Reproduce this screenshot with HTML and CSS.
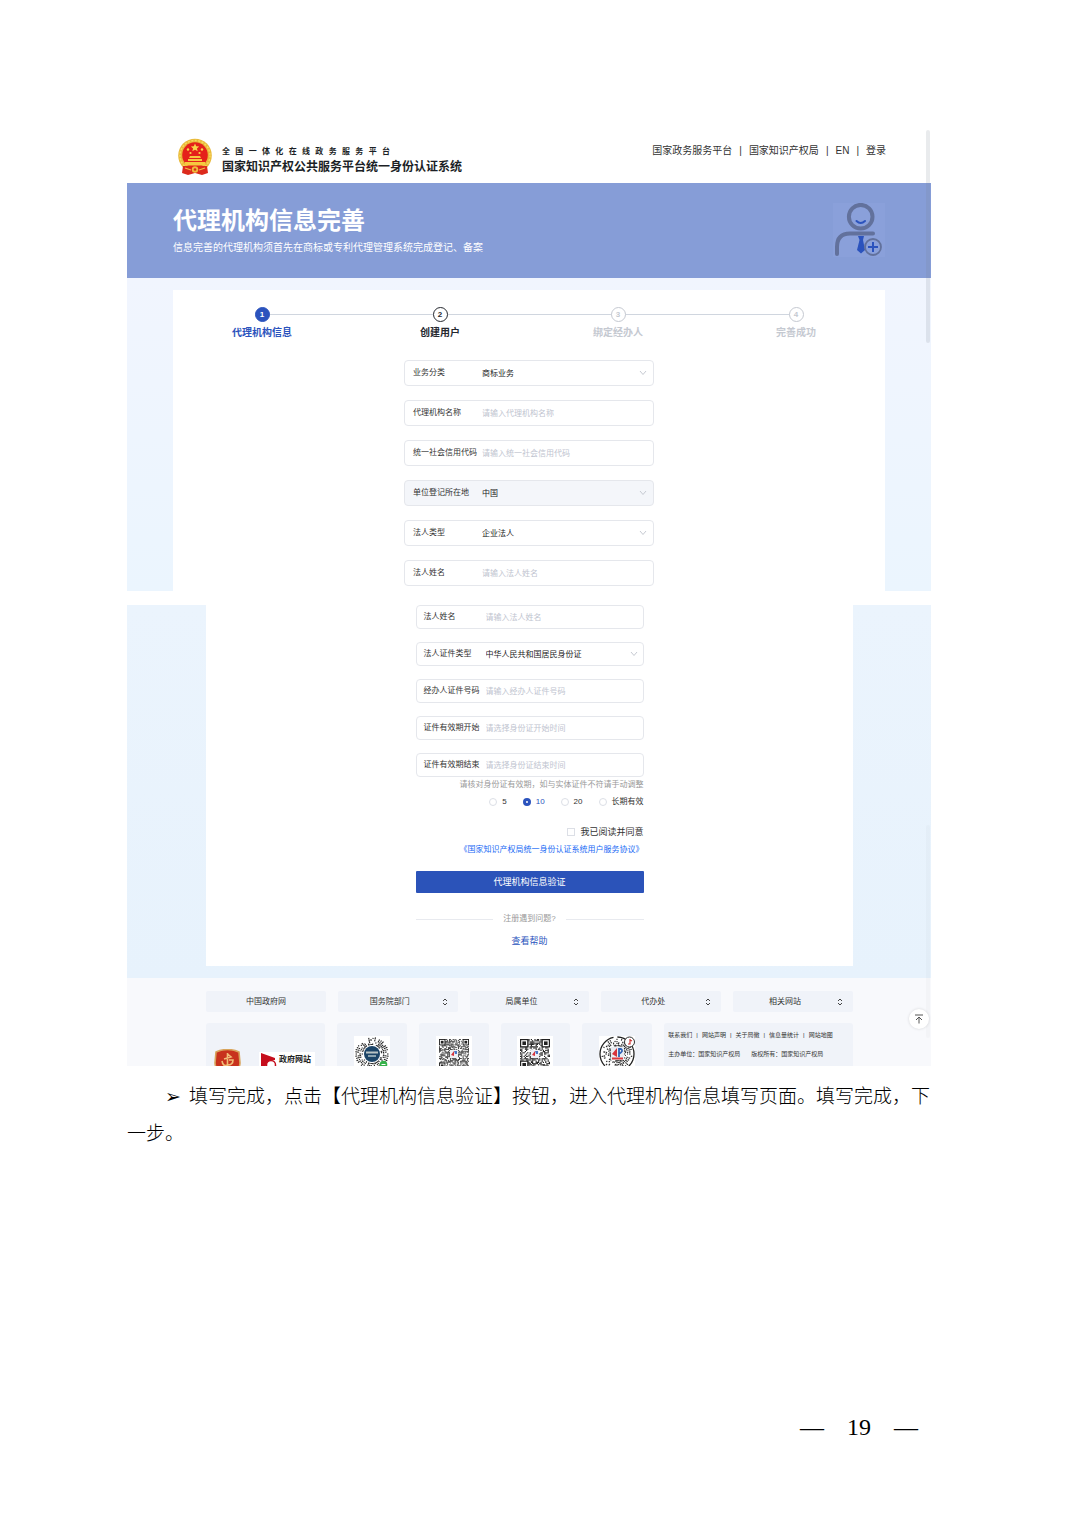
FILE: index.html
```html
<!DOCTYPE html>
<html lang="zh-CN">
<head>
  <meta charset="UTF-8">
  <title>代理机构信息完善</title>
  <link rel="stylesheet" href="styles.css">
</head>
<body>
<main class="page">
  <section class="screen">
    <header class="site-header">
      <svg class="emblem" viewBox="0 0 36 38">
        <circle cx="18" cy="17.500" r="16.800" fill="#e9b93a"/>
        <circle cx="18" cy="17.500" r="15" fill="none" stroke="#f7d95c" stroke-width="1.500" stroke-dasharray="2 1.500"/>
        <path d="M6 28 H30 L31 35 L25 37 L18 35 L11 37 L5 35 Z" fill="#dc2a1c"/>
        <circle cx="18" cy="17" r="12.800" fill="#e5211a"/>
        <path d="M18 5.500 l1.200 2.800 3 .2 -2.300 1.900 .8 2.900 -2.700 -1.600 -2.700 1.600 .8 -2.900 -2.300 -1.900 3 -.2z" fill="#f8d548"/>
        <circle cx="11" cy="11.500" r="1.200" fill="#f8d548"/>
        <circle cx="25" cy="11.500" r="1.200" fill="#f8d548"/>
        <circle cx="13.500" cy="15" r="1.100" fill="#f8d548"/>
        <circle cx="22.500" cy="15" r="1.100" fill="#f8d548"/>
        <path d="M13 18 H23 L24 20 H12 Z M11 21 H25 V23 H11 Z M8 24 H28 V27.500 H8 Z" fill="#f6c93f"/>
        <circle cx="18" cy="31.500" r="3.200" fill="#eebc3b"/>
        <circle cx="18" cy="31.500" r="1.300" fill="#dc2a1c"/>
        <path d="M8 30 L14 32 M28 30 L22 32" stroke="#f0c040" stroke-width="1.200"/>
      </svg>
      <div class="brand">
        <div class="brand-small">全国一体化在线政务服务平台</div>
        <div class="brand-name">国家知识产权公共服务平台统一身份认证系统</div>
      </div>
      <nav class="top-nav">
        <a href="#">国家政务服务平台</a><span>|</span>
        <a href="#">国家知识产权局</a><span>|</span>
        <a href="#">EN</a><span>|</span>
        <a href="#">登录</a>
      </nav>
    </header>

    <div class="banner">
      <div>
        <h1>代理机构信息完善</h1>
        <p>信息完善的代理机构须首先在商标或专利代理管理系统完成登记、备案</p>
      </div>
      <svg class="banner-icon" viewBox="0 0 52 54">
        <rect width="52" height="54" fill="#8aa0da"/>
        <g fill="none" stroke="#62719c" stroke-linecap="round">
          <circle cx="27.700" cy="13.700" r="11.800" stroke-width="4"/>
          <path d="M4 51 V44 Q4 30.500 17 30.500 H40" stroke-width="4"/>
        </g>
        <path d="M23.500 18 Q27.700 22 32 18" fill="none" stroke="#2b53bd" stroke-width="2" stroke-linecap="round"/>
        <path d="M25 33 H31 L30 37 L32 47 L28 50.500 L24 47 L26.500 37 Z" fill="#2b53bd"/>
        <circle cx="40" cy="44" r="8" fill="#8aa0da" stroke="#62719c" stroke-width="1.800"/>
        <path d="M35 44 H45 M40 39 V49" stroke="#2b53bd" stroke-width="2"/>
      </svg>
    </div>

    <div class="backdrop">
      <div class="card">
        <ol class="steps">
          <li class="active"><span class="dot">1</span>代理机构信息</li>
          <li class="next"><span class="dot">2</span>创建用户</li>
          <li><span class="dot">3</span>绑定经办人</li>
          <li><span class="dot">4</span>完善成功</li>
        </ol>
        <form class="form">
          <div class="field">
            <label for="biz">业务分类</label>
            <select id="biz"><option>商标业务</option></select>
            <svg class="chevron" viewBox="0 0 8 6"><path d="M1 1 L4 4.500 L7 1"/></svg>
          </div>
          <div class="field">
            <label for="agency">代理机构名称</label>
            <input id="agency" type="text" placeholder="请输入代理机构名称">
          </div>
          <div class="field">
            <label for="code">统一社会信用代码</label>
            <input id="code" type="text" placeholder="请输入统一社会信用代码">
          </div>
          <div class="field disabled">
            <label for="place">单位登记所在地</label>
            <select id="place"><option>中国</option></select>
            <svg class="chevron" viewBox="0 0 8 6"><path d="M1 1 L4 4.500 L7 1"/></svg>
          </div>
          <div class="field">
            <label for="ptype">法人类型</label>
            <select id="ptype"><option>企业法人</option></select>
            <svg class="chevron" viewBox="0 0 8 6"><path d="M1 1 L4 4.500 L7 1"/></svg>
          </div>
          <div class="field">
            <label for="pname">法人姓名</label>
            <input id="pname" type="text" placeholder="请输入法人姓名">
          </div>
        </form>
      </div>
    </div>
    <div class="scrollbar"></div>
  </section>

  <section class="screen">
    <div class="backdrop backdrop-low">
      <div class="card">
        <form class="form form-small">
          <div class="field">
            <label for="lname">法人姓名</label>
            <input id="lname" type="text" placeholder="请输入法人姓名">
          </div>
          <div class="field">
            <label for="idtype">法人证件类型</label>
            <select id="idtype"><option>中华人民共和国居民身份证</option></select>
            <svg class="chevron" viewBox="0 0 8 6"><path d="M1 1 L4 4.500 L7 1"/></svg>
          </div>
          <div class="field">
            <label for="idno">经办人证件号码</label>
            <input id="idno" type="text" placeholder="请输入经办人证件号码">
          </div>
          <div class="field">
            <label for="start">证件有效期开始</label>
            <input id="start" type="text" placeholder="请选择身份证开始时间">
          </div>
          <div class="field">
            <label for="end">证件有效期结束</label>
            <input id="end" type="text" placeholder="请选择身份证结束时间">
          </div>
        </form>
        <div class="form-foot">
          <p class="hint">请核对身份证有效期，如与实体证件不符请手动调整</p>
          <div class="radios">
            <label><input type="radio" name="years">5</label>
            <label><input type="radio" name="years" checked>10</label>
            <label><input type="radio" name="years">20</label>
            <label><input type="radio" name="years">长期有效</label>
          </div>
          <label class="agree"><input type="checkbox">我已阅读并同意</label>
          <a class="agreement" href="#">《国家知识产权局统一身份认证系统用户服务协议》</a>
          <button class="submit" type="button">代理机构信息验证</button>
          <div class="divider"><span>注册遇到问题?</span></div>
          <a class="help" href="#">查看帮助</a>
        </div>
      </div>
    </div>

    <footer class="site-footer">
      <div class="menus">
        <a class="menu" href="#">中国政府网</a>
        <div class="menu">
          <select aria-label="国务院部门"><option>国务院部门</option></select>
          <svg class="sort" viewBox="0 0 6 8"><path d="M1 3 L3 1 L5 3 M1 5 L3 7 L5 5"/></svg>
        </div>
        <div class="menu">
          <select aria-label="局属单位"><option>局属单位</option></select>
          <svg class="sort" viewBox="0 0 6 8"><path d="M1 3 L3 1 L5 3 M1 5 L3 7 L5 5"/></svg>
        </div>
        <div class="menu">
          <select aria-label="代办处"><option>代办处</option></select>
          <svg class="sort" viewBox="0 0 6 8"><path d="M1 3 L3 1 L5 3 M1 5 L3 7 L5 5"/></svg>
        </div>
        <div class="menu">
          <select aria-label="相关网站"><option>相关网站</option></select>
          <svg class="sort" viewBox="0 0 6 8"><path d="M1 3 L3 1 L5 3 M1 5 L3 7 L5 5"/></svg>
        </div>
      </div>
      <div class="tiles">
        <div class="tile badges">
          <svg class="shield" viewBox="0 0 27 30">
            <path d="M2 3 Q13.500 -2 25 3 L26 14 Q25 25 13.500 30 Q2 25 1 14 Z" fill="#c8321d" stroke="#d8a45c" stroke-width="1.600"/>
            <path d="M13.500 4 V20 M13.500 5 L17 8 L10 10 M8 12 Q9 18 13.500 16 Q19 16 19 11 H15" fill="none" stroke="#f0bd77" stroke-width="1.600"/>
          </svg>
          <div class="gov-site">
            <svg viewBox="0 0 18 20">
              <path d="M2 1 L16 6 L16 8 Q6 8 6 19 H2 Z" fill="#c50d1c"/>
              <circle cx="12" cy="13" r="4.500" fill="#fff" stroke="#c50d1c" stroke-width="1.500"/>
            </svg>
            <span>政府网站</span>
          </div>
        </div>
        <div class="tile"><svg class="qr" data-kind="round" viewBox="0 0 36 36"></svg></div>
        <div class="tile"><svg class="qr" data-kind="fine" viewBox="0 0 36 36"></svg></div>
        <div class="tile"><svg class="qr" data-kind="coarse" viewBox="0 0 36 36"></svg></div>
        <div class="tile"><svg class="qr" data-kind="ring" viewBox="0 0 36 36"></svg></div>
        <div class="tile about">
          <div class="about-links">
            <a href="#">联系我们</a><span>|</span>
            <a href="#">网站声明</a><span>|</span>
            <a href="#">关于局徽</a><span>|</span>
            <a href="#">信息量统计</a><span>|</span>
            <a href="#">网站地图</a>
          </div>
          <div class="owners"><span>主办单位：国家知识产权局</span><span>版权所有：国家知识产权局</span></div>
        </div>
      </div>
    </footer>
    <div class="scrollbar scrollbar-faint"></div>
    <button class="to-top" type="button" aria-label="返回顶部">
      <svg viewBox="0 0 10 10"><path d="M1 1 H9 M5 9.500 V3 M2 6 L5 3 L8 6"/></svg>
    </button>
  </section>

  <p class="note"><span class="arrow">➢</span>填写完成，点击【代理机构信息验证】按钮，进入代理机构信息填写页面。填写完成，下一步。</p>

  <div class="page-number"><span>—</span><span>19</span><span>—</span></div>
</main>
<script src="script.js"></script>
</body>
</html>
```
FILE: styles.css
```css
* {
  box-sizing: border-box;
}
body {
  margin: 0;
  background: #fff;
  color: #333;
  font-family: "Liberation Sans", "Noto Sans CJK SC", sans-serif;
  font-size: 8px;
}
a {
  color: inherit;
  text-decoration: none;
}
h1, p, ol {
  margin: 0;
  padding: 0;
}
input, select, button {
  font: inherit;
  color: inherit;
  margin: 0;
  padding: 0;
  border: 0;
  background: none;
  appearance: none;
}
.page {
  display: flex;
  flex-direction: column;
  min-height: 100vh;
  padding: 130px 149px 88px 127px;
}
.screen {
  position: relative;
  overflow: hidden;
}
.screen + .screen {
  margin-top: 14px;
}

/* header */
.site-header {
  display: flex;
  height: 53px;
  padding: 8px 45px 0 50px;
}
.emblem {
  width: 36px;
  height: 38px;
}
.brand {
  margin: 8px 0 0 9px;
  color: #1c1f26;
  font-weight: bold;
}
.brand-small {
  width: 70%;
  font-size: 8px;
  line-height: 12px;
  text-align-last: justify;
}
.brand-name {
  font-size: 12px;
  line-height: 18px;
}
.top-nav {
  display: flex;
  gap: 7px;
  margin-left: auto;
  padding-top: 5px;
  font-size: 10px;
  line-height: 16px;
}

/* banner */
.banner {
  display: flex;
  justify-content: space-between;
  height: 95px;
  padding: 20px 46px 0;
  background: #869dd7;
  color: #fff;
}
.banner h1 {
  font-size: 24px;
  line-height: 36px;
}
.banner p {
  margin-top: 1px;
  font-size: 10px;
  line-height: 16px;
}
.banner-icon {
  width: 52px;
  height: 54px;
}

.backdrop {
  padding: 12px 46px 0;
  background: linear-gradient(#f1f5fe, #ebf5fe);
}
.backdrop-low {
  padding: 0 78px 12px 79px;
  background: linear-gradient(#ebf4fd, #e7f2fc);
}
.card {
  background: #fff;
}

/* steps */
.steps {
  display: grid;
  grid-template-columns: repeat(4, 1fr);
  padding-top: 17px;
  list-style: none;
}
.steps li {
  position: relative;
  display: flex;
  flex-direction: column;
  align-items: center;
  gap: 4px;
  color: #c5c9d1;
  font-size: 10px;
  font-weight: bold;
  line-height: 14px;
}
.steps li + li::before {
  content: "";
  position: absolute;
  top: 7px;
  right: 50%;
  width: 100%;
  height: 1px;
  background: #d0d6df;
}
.dot {
  z-index: 1;
  width: 15px;
  height: 15px;
  border: 1px solid #c5c9d1;
  border-radius: 50%;
  background: #fff;
  font-size: 8px;
  line-height: 13px;
  text-align: center;
}
.steps .active {
  color: #2b53bd;
}
.steps .active .dot {
  border-color: #2b53bd;
  background: #2b53bd;
  color: #fff;
}
.steps .next {
  color: #25282f;
}
.steps .next .dot {
  border-color: #25282f;
}

/* form */
.form {
  display: flex;
  flex-direction: column;
  gap: 14px;
  width: 250px;
  margin: 0 auto;
  padding: 20px 0 5px;
}
.field {
  display: flex;
  align-items: center;
  height: 26px;
  padding: 0 6px 0 8px;
  border: 1px solid #e5e7ec;
  border-radius: 4px;
}
.field label {
  flex: 0 0 69px;
  line-height: 10px;
  white-space: nowrap;
}
.field input,
.field select {
  flex: 1;
  min-width: 0;
  height: 20px;
  color: #222;
}
.field input::placeholder {
  color: #c0c4cf;
}
.field.disabled {
  background: #f4f6fa;
}
.chevron {
  width: 8px;
  height: 6px;
  fill: none;
  stroke: #c6cad2;
}
.form-small {
  gap: 13px;
  width: 228px;
  padding: 0;
}
.form-small .field {
  height: 24px;
  padding: 0 5px 0 7px;
}
.form-small label {
  flex-basis: 62px;
}

.form-foot {
  display: flex;
  flex-direction: column;
  align-items: flex-end;
  width: 228px;
  margin: 0 auto;
  padding: 2px 0 19px;
  line-height: 12px;
}
.hint {
  color: #999;
}
.radios {
  display: flex;
  gap: 16px;
  margin-top: 5px;
}
.radios label,
.agree {
  display: flex;
  align-items: center;
  gap: 5px;
}
.radios input {
  width: 8px;
  height: 8px;
  border: 1px solid #dcdfe6;
  border-radius: 50%;
}
.radios input:checked {
  border: 3px solid #2b53bd;
  background: #fff;
}
.radios label:has(:checked) {
  color: #2b53bd;
}
.agree {
  margin-top: 18px;
  font-size: 9px;
}
.agree input {
  width: 8px;
  height: 8px;
  border: 1px solid #dcdfe6;
}
.agreement {
  margin-top: 6px;
  color: #1769f5;
}
.submit {
  width: 100%;
  height: 22px;
  margin-top: 15px;
  border-radius: 1px;
  background: #2b53b9;
  color: #fff;
  font-size: 9px;
}
.divider {
  display: flex;
  align-items: center;
  gap: 10px;
  width: 100%;
  margin-top: 20px;
  color: #999;
}
.divider::before,
.divider::after {
  content: "";
  flex: 1;
  height: 1px;
  background: #e8eaef;
}
.help {
  align-self: center;
  margin-top: 10px;
  color: #2b53bd;
  font-size: 9px;
}

/* footer */
.site-footer {
  padding: 13px 78px 0 79px;
  background: #f8f9fc;
}
.menus {
  display: grid;
  grid-template-columns: repeat(5, 1fr);
  gap: 12px;
}
.menu {
  display: flex;
  align-items: center;
  justify-content: center;
  height: 21px;
  border-radius: 2px;
  background: #f0f3f9;
  line-height: 10px;
}
.menu select {
  flex: 1;
  min-width: 0;
  text-align-last: center;
}
.sort {
  width: 6px;
  height: 8px;
  margin-right: 10px;
  fill: none;
  stroke: #444;
}
.tiles {
  display: grid;
  grid-template-columns: 119fr 70fr 70fr 70fr 70fr 189fr;
  gap: 12px;
  height: 43px;
  margin-top: 11px;
  overflow: hidden;
}
.tile {
  display: flex;
  justify-content: center;
  padding-top: 13px;
  border-radius: 3px 3px 0 0;
  background: #f0f3f9;
}
.qr {
  flex: none;
  width: 36px;
  height: 36px;
  background: #fff;
}
.badges {
  justify-content: flex-start;
  gap: 18px;
  padding: 26px 0 0 8px;
}
.shield {
  flex: none;
  width: 27px;
  height: 30px;
}
.gov-site {
  display: flex;
  gap: 2px;
  width: 56px;
  height: 20px;
  margin-top: 3px;
  background: #fff;
  color: #222;
  font-weight: bold;
}
.gov-site svg {
  flex: none;
  width: 18px;
  height: 20px;
}
.gov-site span {
  height: 15px;
  border-bottom: 1px solid #e08a8f;
  line-height: 16px;
  white-space: nowrap;
}
.about {
  flex-direction: column;
  justify-content: flex-start;
  gap: 9px;
  padding: 7px 4px 0;
  font-size: 6px;
  line-height: 10px;
}
.about-links {
  display: flex;
  gap: 4px;
}
.owners {
  display: flex;
  gap: 11px;
}

.scrollbar {
  position: absolute;
  top: 0;
  right: 1px;
  width: 4px;
  height: 213px;
  border-radius: 2px;
  background: rgba(120, 130, 140, 0.16);
}
.scrollbar-faint {
  top: 220px;
  background: rgba(120, 130, 140, 0.04);
}
.to-top {
  position: absolute;
  right: 2px;
  bottom: 37px;
  display: flex;
  align-items: center;
  justify-content: center;
  width: 20px;
  height: 20px;
  border-radius: 50%;
  background: #fff;
  box-shadow: 0 0 3px rgba(0, 0, 0, 0.15);
}
.to-top svg {
  width: 10px;
  height: 10px;
  fill: none;
  stroke: #555;
}

/* document text */
.note {
  margin-top: 10px;
  color: #000;
  font-family: "Noto Sans CJK SC", sans-serif;
  font-size: 19px;
  font-weight: 300;
  line-height: 37px;
  text-indent: 38px;
}
.arrow {
  display: inline-block;
  width: 24px;
  font-family: "DejaVu Sans", sans-serif;
  line-height: 1;
  text-indent: 0;
}
.page-number {
  display: flex;
  justify-content: flex-end;
  gap: 23px;
  margin-top: auto;
  padding-right: 13px;
  color: #000;
  font-family: "Liberation Serif", serif;
  font-size: 24px;
  line-height: 24px;
}
```
FILE: script.js
```js
let seed = 7;
function rnd() {
  seed = (seed * 16807) % 2147483647;
  return seed / 2147483647;
}

function rect(x, y, w, h, fill) {
  return `<rect x="${x}" y="${y}" width="${w}" height="${h}" fill="${fill}"/>`;
}

function finder(x, y, u) {
  return rect(x, y, 7 * u, 7 * u, "#222")
    + rect(x + u, y + u, 5 * u, 5 * u, "#fff")
    + rect(x + 2 * u, y + 2 * u, 3 * u, 3 * u, "#222");
}

function squareCode(cells) {
  const u = 30 / cells;
  let out = "";
  for (let r = 0; r < cells; r++) {
    for (let c = 0; c < cells; c++) {
      if (rnd() < 0.55) out += rect(3 + c * u, 3 + r * u, u, u, "#222");
    }
  }
  const far = 33 - 7 * u;
  out += finder(3, 3, u) + finder(far, 3, u) + finder(3, far, u);
  out += rect(14, 14, 8, 8, "#eef0f4");
  out += '<path d="M15 19 L18 15 V20" fill="#d8333b"/><path d="M18 15 H21 V18 H19" fill="#4b77c5"/>';
  return out;
}

// short radial strokes around a centre
function rays(inner, outer, count) {
  let out = "";
  for (let i = 0; i < count; i++) {
    const a = (i / count) * Math.PI * 2;
    for (let d = inner; d < outer; d += 2) {
      if (rnd() < 0.35) continue;
      const e = d + 1 + rnd();
      out += `<path d="M${18 + Math.cos(a) * d} ${18 + Math.sin(a) * d} L${18 + Math.cos(a) * e} ${18 + Math.sin(a) * e}" stroke="#222" stroke-width="1.1"/>`;
    }
  }
  return out;
}

const draw = {
  round: () => rays(9, 17, 46)
    + '<circle cx="18" cy="18" r="8" fill="#1c4568"/>'
    + rect(12, 15.5, 12, 2, "#b9c4c4") + rect(14, 19, 8, 2, "#8aa3b0")
    + '<circle cx="29.500" cy="28.500" r="3.800" fill="#36b24a"/><path d="M27.500 28.500 H31.500" stroke="#fff"/>',
  fine: () => squareCode(33),
  coarse: () => squareCode(25),
  ring: () => rays(6, 15, 40)
    + '<circle cx="18" cy="18" r="17" fill="none" stroke="#222" stroke-width="1.300" stroke-dasharray="36 4"/>'
    + rect(12, 11, 13, 13, "#e9edf3")
    + '<path d="M13 18 L18 12 V21" fill="#d8333b"/><path d="M20 21 V13 H22 Q25 15 20 18" fill="none" stroke="#2f62b5" stroke-width="1.800"/>'
    + rect(13, 21.5, 11, 2, "#dc3a3f")
    + '<circle cx="30.500" cy="6" r="5" fill="#fff" stroke="#333"/><path d="M31 3 V8 H29 M31 4 L33 5" fill="none" stroke="#c33" stroke-width="1.200"/>'
};

document.querySelectorAll(".qr").forEach((svg) => {
  svg.innerHTML = draw[svg.dataset.kind]();
});
```
